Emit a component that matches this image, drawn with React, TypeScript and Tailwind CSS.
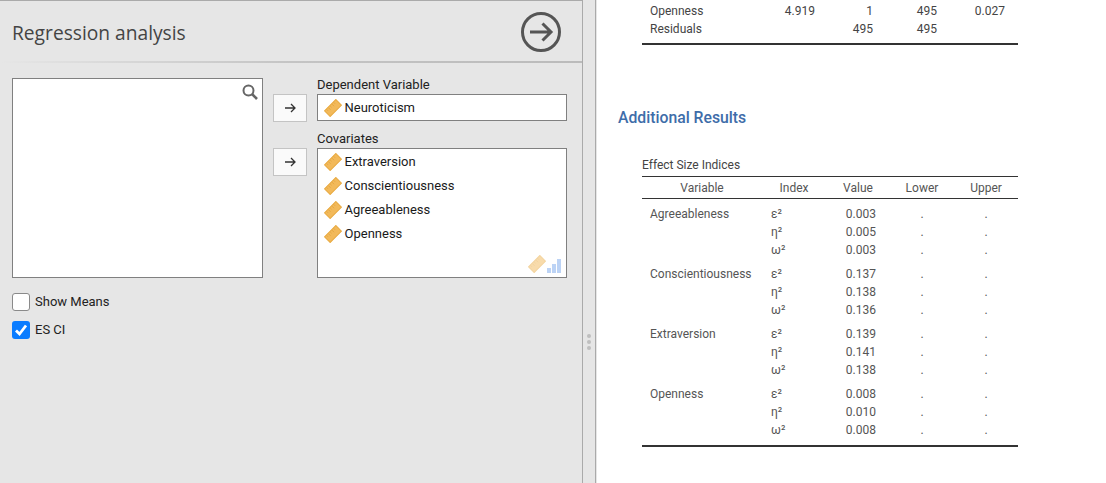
import React from "react";

const Ruler = ({ faded = false }: { faded?: boolean }) => (
  <svg width="18" height="18" viewBox="0 0 18 18" className={faded ? "opacity-50" : ""}>
    <g transform="rotate(-45 9 9)">
      <rect x="1" y="5" width="16" height="8" fill="#f2b95a" stroke="#e8a93f" strokeWidth="1" />
      <path d="M3.500 5.500v2M6 5.500v3M8.500 5.500v2M11 5.500v3M13.500 5.500v2" stroke="#e0a038" strokeWidth="0.7" fill="none" />
    </g>
  </svg>
);

const Bars = () => (
  <svg width="14" height="14" viewBox="0 0 14 14">
    <rect x="0" y="9" width="4" height="5" fill="#bcd3f5" />
    <rect x="5" y="5" width="4" height="9" fill="#bcd3f5" />
    <rect x="10" y="0" width="4" height="14" fill="#bcd3f5" />
  </svg>
);

const MoveArrow = () => (
  <svg width="12" height="12" viewBox="0 0 12 12" fill="none" stroke="#333" strokeWidth="1.3">
    <path d="M1 6h10M7 2l4 4-4 4" />
  </svg>
);

const ArrowButton = () => (
  <button className="w-[34px] h-[28px] flex items-center justify-center bg-[#fafafa] border border-[#c4c4c4]">
    <MoveArrow />
  </button>
);

const Var = ({ name }: { name: string }) => (
  <div className="h-[24px] flex items-center gap-[3px] pl-[5.5px]">
    <Ruler />
    <span className="text-[13px] text-[#1a1a1a]">{name}</span>
  </div>
);

const groups: [string, string[]][] = [
  ["Agreeableness", ["0.003", "0.005", "0.003"]],
  ["Conscientiousness", ["0.137", "0.138", "0.136"]],
  ["Extraversion", ["0.139", "0.141", "0.138"]],
  ["Openness", ["0.008", "0.010", "0.008"]],
];
const indices = ["ε²", "η²", "ω²"];

const App = () => (
  <div className="w-[1106px] h-[483px] flex overflow-hidden bg-[#e6e6e6] font-['Roboto',sans-serif]">
    <div className="w-[583px] h-full shrink-0 border-t border-r border-[#aaaaaa] flex flex-col">
      <div className="h-[60px] shrink-0 flex items-center justify-between pl-[12px] pr-[21px] pt-[2px]">
        <h1 className="mt-[3px] font-['Open_Sans',sans-serif] text-[19.2px] text-[#444444] font-normal">Regression analysis</h1>
        <svg width="40" height="40" viewBox="0 0 40 40" fill="none" stroke="#555555" strokeWidth="3">
          <circle cx="20" cy="20" r="18.5" />
          <path d="M9 20h21M21.500 11.500L30 20l-8.500 8.500" strokeWidth="3" />
        </svg>
      </div>
      <div className="h-[2px] shrink-0 bg-gradient-to-r from-[#e6e6e6] via-[#c4c4c4] to-[#bbbbbb]" />
      <div className="flex pl-[12px] pt-[15px]">
        <div className="w-[251px] shrink-0">
          <div className="h-[200px] bg-white border border-[#808080] flex justify-end pt-[5px] pr-[4px]">
            <svg width="16" height="16" viewBox="0 0 16 16" fill="none" stroke="#666666">
              <circle cx="6.500" cy="6.500" r="5" strokeWidth="2" />
              <path d="M10 10l5 5" strokeWidth="2.600" />
            </svg>
          </div>
          <div className="mt-[15px] flex items-center gap-[5px] h-[18px]">
            <div className="w-[18px] h-[18px] bg-white border border-[#8a8a8a] rounded-[3px]" />
            <span className="text-[13px] text-[#222222]">Show Means</span>
          </div>
          <div className="mt-[10px] flex items-center gap-[5px] h-[18px]">
            <div className="w-[18px] h-[18px] bg-[#0a7cff] rounded-[3px] flex items-center justify-center">
              <svg width="16" height="16" viewBox="0 0 16 16" fill="none" stroke="white" strokeWidth="2.800">
                <path d="M3 8.500L6.500 12L13 3.500" />
              </svg>
            </div>
            <span className="text-[13px] text-[#222222]">ES CI</span>
          </div>
        </div>
        <div className="w-[34px] ml-[10px] shrink-0 pt-[16px] flex flex-col gap-[26px]">
          <ArrowButton />
          <ArrowButton />
        </div>
        <div className="w-[250px] ml-[10px] shrink-0">
          <div className="h-[16px] text-[13px] leading-[14px] text-[#222222]">Dependent Variable</div>
          <div className="h-[27px] bg-white border border-[#808080] flex items-center">
            <Var name="Neuroticism" />
          </div>
          <div className="h-[16px] mt-[10px] text-[13px] leading-[16px] text-[#222222]">Covariates</div>
          <div className="relative h-[130px] mt-[1px] bg-white border border-[#808080] pt-[1px]">
            <Var name="Extraversion" />
            <Var name="Conscientiousness" />
            <Var name="Agreeableness" />
            <Var name="Openness" />
            <div className="absolute right-[5px] bottom-[4px] flex items-end gap-[1px]">
              <Ruler faded />
              <Bars />
            </div>
          </div>
        </div>
      </div>
    </div>
    <div className="w-[13px] h-full shrink-0 border-r border-[#aaaaaa] flex flex-col items-center justify-center gap-[2px] pt-[201px] pr-[1px] box-border">
      <div className="w-[4px] h-[4px] rounded-full bg-[#bfbfbf]" />
      <div className="w-[4px] h-[4px] rounded-full bg-[#bfbfbf]" />
      <div className="w-[4px] h-[4px] rounded-full bg-[#bfbfbf]" />
    </div>
    <div className="flex-1 h-full bg-white ml-[1px] pl-[21px] text-[12px] text-[#555555]">
      <div className="ml-[24px] w-[376px] pt-[2px]">
        <table className="w-[376px] table-fixed border-b-2 border-[#333333]">
          <colgroup>
            <col className="w-[120px]" />
            <col className="w-[61px]" />
            <col className="w-[58px]" />
            <col className="w-[64px]" />
            <col className="w-[73px]" />
          </colgroup>
          <tbody className="text-[#444444]">
            <tr className="h-[18px] leading-[18px]">
              <td className="pl-[8px]">Openness</td>
              <td className="text-right pr-[8px]">4.919</td>
              <td className="text-right pr-[8px]">1</td>
              <td className="text-right pr-[8px]">495</td>
              <td className="text-right pr-[13px]">0.027</td>
            </tr>
            <tr className="h-[18px] leading-[18px]">
              <td className="pl-[8px]">Residuals</td>
              <td />
              <td className="text-right pr-[8px]">495</td>
              <td className="text-right pr-[8px]">495</td>
              <td />
            </tr>
            <tr className="h-[6px]"><td colSpan={5} /></tr>
          </tbody>
        </table>
      </div>
      <h2 className="mt-[63px] h-[20px] leading-[20px] text-[15.75px] font-medium text-[#3e6da9]">Additional Results</h2>
      <div className="ml-[24px] w-[376px] mt-[29px]">
        <div className="h-[17px] leading-[17px] text-[#444444]">Effect Size Indices</div>
        <table className="w-[376px] table-fixed border-t border-b-2 border-[#333333] mt-[2px]">
          <colgroup>
            <col className="w-[120px]" />
            <col className="w-[64px]" />
            <col className="w-[64px]" />
            <col className="w-[64px]" />
            <col className="w-[64px]" />
          </colgroup>
          <thead>
            <tr className="h-[22px] border-b border-[#333333]">
              <th className="font-normal text-center">Variable</th>
              <th className="font-normal text-center">Index</th>
              <th className="font-normal text-center">Value</th>
              <th className="font-normal text-center">Lower</th>
              <th className="font-normal text-center">Upper</th>
            </tr>
          </thead>
          {groups.map(([name, vals]) => (
            <tbody key={name}>
              {vals.map((v, i) => {
                const pad = i === 0 ? "pt-[6px]" : "";
                return (
                  <tr key={i} className="leading-[18px]">
                    <td className={`pl-[8px] ${pad}`}>{i === 0 ? name : ""}</td>
                    <td className={`pl-[9px] ${pad}`}>{indices[i]}</td>
                    <td className={`text-right pr-[14px] ${pad}`}>{v}</td>
                    <td className={`text-center ${pad}`}>.</td>
                    <td className={`text-center ${pad}`}>.</td>
                  </tr>
                );
              })}
            </tbody>
          ))}
          <tbody><tr className="h-[7px]"><td colSpan={5} /></tr></tbody>
        </table>
      </div>
    </div>
  </div>
);

export default App;
